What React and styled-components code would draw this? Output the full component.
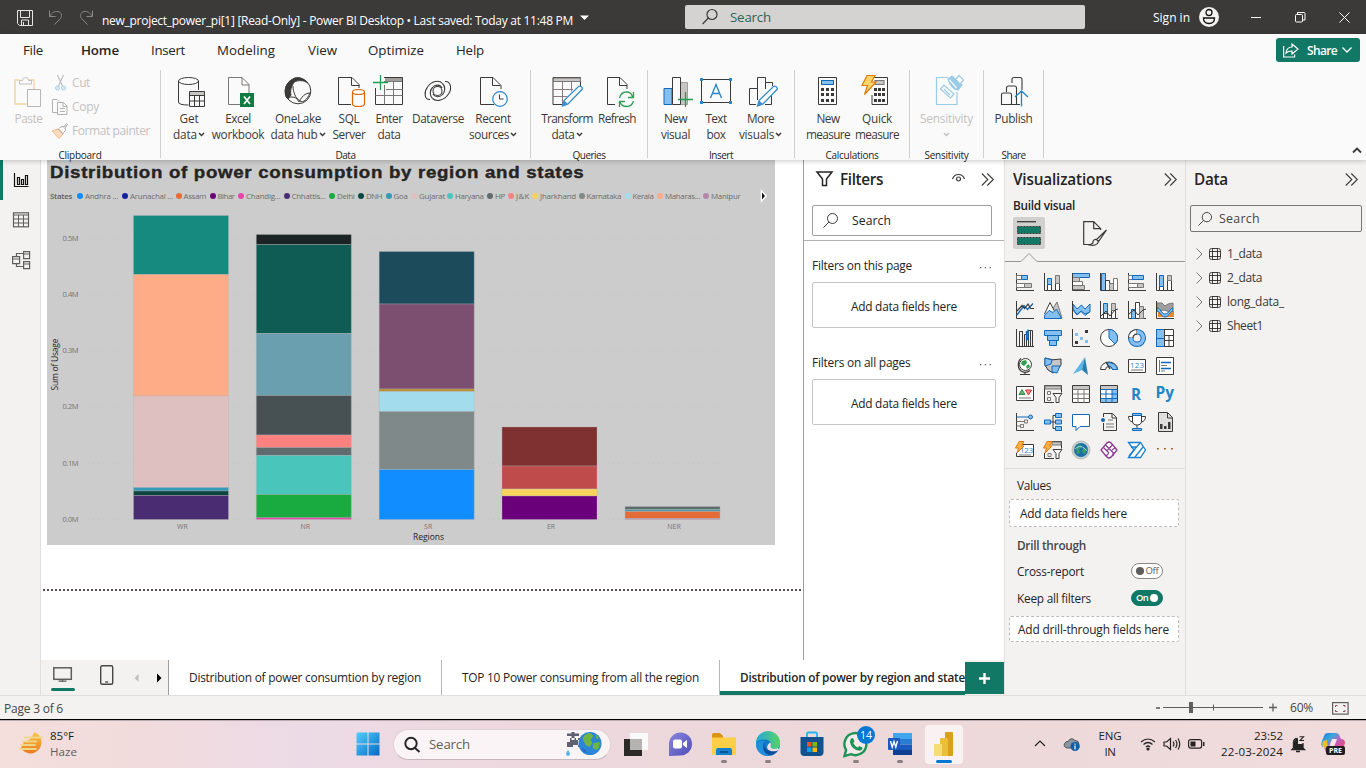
import React, { useLayoutEffect, useRef } from 'react';
import styled, { createGlobalStyle, css } from 'styled-components';

const GlobalStyle = createGlobalStyle`
  *, *::before, *::after { box-sizing: border-box; }
  body { margin: 0; background: #f3f2f1; overflow: hidden; font-family: "Open Sans", "Noto Sans", sans-serif; color: #252423; }
  svg { display: block; flex: none; overflow: visible; }
`;

/* ---------- text that is tracked to a given width ---------- */

const FitSpan = styled.span`
  display: block;
  flex: none;
  white-space: nowrap;
  font-size: ${p => p.$size}px;
  font-weight: ${p => p.$weight || 400};
  color: ${p => p.$color || 'inherit'};
  line-height: ${p => p.$lh || 16}px;
`;

function Fit({ w, size = 12, weight, color, lh, children }) {
  const ref = useRef(null);
  useLayoutEffect(() => {
    const el = ref.current;
    el.style.letterSpacing = '0px';
    const range = document.createRange();
    range.selectNodeContents(el);
    const natural = range.getBoundingClientRect().width;
    el.style.letterSpacing = `${(w - natural) / children.length}px`;
  }, [w, children]);
  return <FitSpan ref={ref} $size={size} $weight={weight} $color={color} $lh={lh}>{children}</FitSpan>;
}

const D = '#3b3a39';
const B = '#84bff0';
const BS = '#1068b8';
const G = '#c8c6c4';
const GS = '#797775';
const GREEN = '#117865';

const Svg = ({ w, h, children, ...rest }) => (
  <svg width={w} height={h} viewBox={`0 0 ${w} ${h}`} fill="none" {...rest}>{children}</svg>
);

/* ---------- title bar ---------- */

const Screen = styled.div`
  width: 1366px;
  height: 768px;
  display: flex;
  flex-direction: column;
  overflow: hidden;
`;

const TitleBar = styled.header`
  height: 34px;
  flex: none;
  display: flex;
  align-items: center;
  background: #3b3a39;
  color: #fff;
  padding-left: 16px;
`;

const QuickActions = styled.div`
  display: flex;
  align-items: center;
  gap: 14px;
  width: 86px;
  padding-top: 2px;
`;

const FileName = styled.div`
  display: flex;
  align-items: center;
  gap: 7px;
  width: 583px;
  padding-top: 7px;
`;

const TitleSearch = styled.div`
  width: 400px;
  height: 24px;
  border-radius: 2px;
  background: #d4d3d1;
  display: flex;
  align-items: center;
  gap: 12px;
  padding-left: 17px;
`;

const WindowArea = styled.div`
  flex: 1;
  display: flex;
  align-items: center;
  padding-left: 68px;
`;

const SignIn = styled.div`
  padding-top: 2px;
`;

const Avatar = styled.div`
  margin: 0 32px 0 9px;
`;

const WindowButtons = styled.div`
  display: flex;
  align-items: center;
  gap: 33px;
  padding-top: 1px;
`;

function Title() {
  return (
    <TitleBar>
      <QuickActions>
        <Svg w={18} h={18} stroke="#e8e6e4">
          <path d="M1.5 1.5h15v15h-13l-2-2z" /><path d="M4.5 2v6.500h9V2M5.500 16v-5h7v5M7.500 16v-3" />
        </Svg>
        <Svg w={16} h={18} stroke="#8a8886"><path d="M1.500 1.500v6h6M1.800 7.200C4 3.500 7 2 10 2.500c3.500.800 4.500 4.500 2.500 7L6.500 15.500" /></Svg>
        <Svg w={16} h={18} stroke="#8a8886"><path d="M14.500 1.500v6h-6M14.200 7.200C12 3.500 9 2 6 2.500c-3.500.800-4.500 4.500-2.500 7L9.500 15.500" /></Svg>
      </QuickActions>
      <FileName>
        <Fit w={471} size={12}>new_project_power_pi[1] [Read-Only] - Power BI Desktop • Last saved: Today at 11:48 PM</Fit>
        <Svg w={9} h={12}><path d="M0 .5h9L4.500 5z" fill="#fff" /></Svg>
      </FileName>
      <TitleSearch>
        <Svg w={16} h={16} stroke="#3b3a39" strokeWidth="1.200"><circle cx="10" cy="5.500" r="5" /><path d="M6.300 9L.6 15" /></Svg>
        <Fit w={41} size={13.3} color="#2c6357">Search</Fit>
      </TitleSearch>
      <WindowArea>
        <SignIn><Fit w={37} size={12}>Sign in</Fit></SignIn>
        <Avatar>
          <Svg w={20} h={20}><circle cx="10" cy="10" r="10" fill="#f3f2f1" /><g stroke="#111" strokeWidth="1.300"><circle cx="10" cy="5.500" r="3" /><path d="M4.500 11h11c0 4-2 5.500-5.500 5.500s-5.500-1.500-5.500-5.500z" /></g></Svg>
        </Avatar>
        <WindowButtons>
          <Svg w={11} h={11} stroke="#fff"><path d="M0 5.500h10" /></Svg>
          <Svg w={11} h={11} stroke="#fff"><rect x=".5" y="2.500" width="7" height="7.500" rx="1" /><path d="M2.500 2.500V.5H9q1 0 1 1V8H8" /></Svg>
          <Svg w={11} h={11} stroke="#fff"><path d="M.5.500l10 10M10.500.500l-10 10" /></Svg>
        </WindowButtons>
      </WindowArea>
    </TitleBar>
  );
}

/* ---------- ribbon ---------- */

const RibbonShell = styled.div`
  height: 126px;
  flex: none;
  background: #fafafa;
  box-shadow: 0 1px 5px rgba(0, 0, 0, 0.22);
  position: relative;
  z-index: 2;
`;

const TabStrip = styled.nav`
  height: 32px;
  display: flex;
  align-items: center;
  padding-left: 23px;
`;

const RibbonTab = styled.div`
  width: ${p => p.$w}px;
`;

const ShareButton = styled.div`
  margin-left: auto;
  margin-right: 6px;
  width: 84px;
  height: 24px;
  border-radius: 3px;
  background: ${GREEN};
  color: #fff;
  display: flex;
  align-items: center;
  padding-left: 7px;
  gap: 8px;
`;

const ShareText = styled.div`
  padding-top: 2px;
`;

const ShareCaret = styled.div`
  margin-left: -3px;
`;

const RibbonBody = styled.div`
  display: flex;
  height: 94px;
  padding-top: 4px;
`;

const Group = styled.section`
  width: ${p => p.$w}px;
  height: 88px;
  border-right: 1px solid #d2d0ce;
  display: flex;
  flex-direction: column;
  align-items: center;
`;

const GroupTools = styled.div`
  height: 77px;
  flex: none;
  width: 100%;
  display: flex;
  justify-content: ${p => (p.$pad === undefined ? 'center' : 'flex-start')};
  padding: 3px 0 0 ${p => p.$pad || 0}px;
`;

const Tool = styled.div`
  width: ${p => p.$w}px;
  display: flex;
  flex-direction: column;
  align-items: center;
  color: ${p => (p.$off ? '#c3c1bf' : '#3b3a39')};
`;

const ToolLine = styled.div`
  height: 16px;
  display: flex;
  align-items: center;
  gap: 1px;
  position: relative;
  top: 1px;
`;

const ClipList = styled.div`
  display: flex;
  flex-direction: column;
  margin-top: -3px;
`;

const ClipItem = styled.div`
  height: 24px;
  display: flex;
  align-items: center;
  gap: 4px;
  color: #c3c1bf;
  padding-top: 1px;
`;

const Collapse = styled.div`
  margin-left: auto;
  align-self: flex-end;
  padding: 0 4px 6px 0;
`;

const Caret = ({ color = 'currentColor' }) => (
  <Svg w={7} h={5} stroke={color} strokeWidth="1.500"><path d="M1 1l2.500 2.500L6 1" /></Svg>
);

const ribbonIcons = {
  paste: <g><path d="M10.500 7H6v24h12" stroke="#f7ddb8" strokeWidth="2" /><path d="M20 7h5v9" stroke="#f7ddb8" strokeWidth="2" /><path d="M10.500 11V7.500h3q0-3 3-3t3 3h3V11z" stroke="#c3c1bf" fill="#fafafa" /><path d="M18.500 16.500h13v17h-13z" stroke="#b9b7b5" fill="#fafafa" /></g>,
  get: <g stroke={D}><path d="M9.500 8v21q0 3 10 3M29.500 8v9" /><ellipse cx="19.500" cy="8" rx="10" ry="3.500" /><path d="M20.500 18.500h15v15h-15z" fill="#fafafa" /><path d="M21 19h14v3H21z" fill={G} stroke="none" /><path d="M20.500 22.500h15M20.500 28h15M25.500 22.500v11M30.500 22.500v11" /></g>,
  excel: <g><path d="M23 31.500H10.500v-27H24l7 7V20M24 4.500v7.500h7" stroke={GS} /><rect x="22" y="20" width="14" height="14" fill="#107c41" /><path d="M26 23.500l6 7.500M32 23.500l-6 7.500" stroke="#fff" strokeWidth="1.700" /></g>,
  lake: <g stroke={D}><circle cx="20" cy="18" r="12.800" /><path d="M8 24C5 15 10 8 15 6l2 2c-4 5-5 10-4 14l-3 4z" fill={D} /><path d="M15 6c4-3 11-1 15 4-5-3-9-3-14-1z" fill={D} /><path d="M15 13c0 6 3 12 6 16M21 29c4-8 8-9 12-9M9 25c4-2 10-1 13 3 3 2 7-1 10-8" /></g>,
  sql: <g><path d="M22 31.500H9.500v-27H23l7 7V15M22.500 4.500v8h8" stroke={D} /><g stroke="#d8680b" fill="#fafafa" strokeWidth="1.200"><path d="M23.500 19v12q0 2.500 6 2.500t6-2.500V19" /><ellipse cx="29.500" cy="19" rx="6" ry="2.500" /></g></g>,
  enter: <g stroke={D}><path d="M15 4.500h18.500v27h-27V15" /><path d="M16 5h17v3H16z" fill="#a19f9d" stroke="none" /><path d="M15 8.500h18M15.500 12v19.500M24.500 8.500v23M17 16.500h17M6.500 22.500h27" stroke={GS} /><path d="M11.500 2v15M4 9.500h15" stroke="#1d9e50" strokeWidth="1.300" /></g>,
  dataverse: <g stroke={D} strokeWidth="1.100"><circle cx="19.500" cy="18" r="4.500" /><path d="M12 26.500c-5.500.5-6.500-7-2.500-12.500C13.500 8 21 6.500 24.500 10.500" /><path d="M27 8.500c5.500-.5 7.500 6.500 3.500 12.500-4 6-12 8.500-16 4.500" /><path d="M24.500 10.500c3 3 3 8 0 11-3 3.500-8 2.500-9.500-.500M14.500 25.500c-3-3-3-8 0-11 3-3.500 8-3 9.500.500" /></g>,
  recent: <g><path d="M21 31.500H7.500v-27H20l8 8V16M19.500 4.500v8h8" stroke={D} /><circle cx="27" cy="26" r="7.300" stroke="#2b88c8" strokeWidth="1.200" fill="#fafafa" /><path d="M26.500 21.500V26h4" stroke={D} /></g>,
  transform: <g><path d="M20 31.500H6v-27h27.500V14" stroke={D} /><path d="M6.500 5h27v3.500h-27z" fill={G} stroke={GS} /><path d="M6 16.500h20M6 23.500h14M15.500 8.500v23M24.500 8.500v10" stroke="#8d7a80" /><path d="M15.500 33l1.500-5.500 15-14.500q3 0 3.500 3L21 31z" fill="#fafafa" stroke="#2b88c8" strokeWidth="1.200" /><path d="M15.500 33l1.500-5.500 4 3.500z" fill="#3b8fd0" /></g>,
  refresh: <g><path d="M18 31.500H10.500v-27H23l7 7V16M22.500 4.500v8h7.500" stroke={D} /><g stroke="#2f9e57" strokeWidth="1.300"><path d="M22.500 25q1.500-6 7-6 5 0 6 5M36.500 19v5.500h-5.500M36.500 28q-1.500 5.500-7 5.500-5 0-6.500-4.500M22.500 34v-5.500H28" /></g></g>,
  newVisual: <g><path d="M16.500 9.500h15v22h-15z" fill={G} stroke="#a19f9d" /><path d="M8 15.500h8v16H8z" fill={B} stroke={BS} /><path d="M16.500 4.500h8v27h-8z" fill="#fafafa" stroke={D} /><path d="M29.500 19v15M22 26.500h15" stroke="#1d9e50" strokeWidth="1.300" /></g>,
  textBox: <g><path d="M5.500 6.500h29v23h-29z" stroke={D} /><g fill="#2b88c8"><rect x="4" y="5" width="3" height="3" /><rect x="33" y="5" width="3" height="3" /><rect x="4" y="28" width="3" height="3" /><rect x="33" y="28" width="3" height="3" /></g><path d="M14.500 25L20 11.500 25.500 25M16.500 20.500h7" stroke="#2b88c8" strokeWidth="1.400" /></g>,
  more: <g stroke={D}><path d="M15 31.500H8.500v-16H16M16.500 27V4.500h8V16M24.500 9.500h7V13M30.500 22v9.500H24" /><path d="M16.500 33l1.500-5.500 15-14.500q3 0 3.500 3L22 31z" fill="#fafafa" stroke="#2b88c8" strokeWidth="1.200" /><path d="M16.500 33l1.500-5.500 4 3.500z" fill="#3b8fd0" stroke="none" /></g>,
  calc: <g><path d="M10.500 4.500h18v27h-18z" stroke={D} /><rect x="13.500" y="7.500" width="12" height="4" fill={B} stroke={BS} />{[15, 20, 26].map(y => [13, 18, 23].map(x => <rect key={`${x}${y}`} x={x} y={y} width="3" height="3" fill={D} />))}</g>,
  quick: <g><path d="M16 4.500h14.500v27H15V22" stroke={D} /><rect x="18" y="7.500" width="9" height="4" fill={G} stroke={GS} />{[15, 20, 26].map(y => [17, 21, 25].map(x => <rect key={`${x}${y}`} x={x} y={y} width="3" height="3" fill={D} />))}<path d="M10 2.500h8L14.500 9h4.500L7.500 21.500l3-9H5z" fill="#fbd56a" stroke="#e07b12" strokeWidth="1.200" /></g>,
  sensitivity: <g stroke="#9ccbe8" strokeWidth="1.200"><path d="M21 4.500H9.500v27H30V19" /><path d="M13.500 16l3.500-4 10 9-3.500 4zM17 16l6 6" /><path d="M21 6l4-3 10 9-4 5q-7-1-10-11z" fill="#9ccbe8" /><path d="M22.500 7l7 8" stroke="#fafafa" /><path d="M29 6l3-3.500 4.500 4.500-3 3.500" fill="#fafafa" /></g>,
  publish: <g stroke={D} strokeWidth="1.100"><path d="M18 10V6.500q0-2 2-2h6q2 0 2 2V17M12.500 19v-4q0-2 2-2h6q2 0 2 2v17M7.500 31.500V22q0-2 2-2h6q2 0 2 2v9.500zM7.500 31.500H26" /><path d="M27.500 33.500V18.500M21 24l6.500-6 6.500 6" stroke="#2385c6" strokeWidth="1.300" /></g>,
};

const RibbonTool = ({ icon, w, l1, w1, l2, w2, caret, off }) => (
  <Tool $w={w} $off={off}>
    <Svg w={40} h={36}>{ribbonIcons[icon]}</Svg>
    <ToolLine><Fit w={w1} size={11.800}>{l1}</Fit></ToolLine>
    <ToolLine>{l2 && <Fit w={w2} size={11.800}>{l2}</Fit>}{caret && <Caret />}</ToolLine>
  </Tool>
);

const ribbonGroups = [
  { name: 'Data', lw: 20, w: 370, pad: 4, tools: [
    { icon: 'get', w: 48, l1: 'Get', w1: 19, l2: 'data', w2: 24, caret: true },
    { icon: 'excel', w: 50, l1: 'Excel', w1: 25.500, l2: 'workbook', w2: 52.500 },
    { icon: 'lake', w: 70, l1: 'OneLake', w1: 46, l2: 'data hub', w2: 47, caret: true },
    { icon: 'sql', w: 32, l1: 'SQL', w1: 21, l2: 'Server', w2: 33 },
    { icon: 'enter', w: 48, l1: 'Enter', w1: 27, l2: 'data', w2: 23 },
    { icon: 'dataverse', w: 50, l1: 'Dataverse', w1: 52 },
    { icon: 'recent', w: 60, l1: 'Recent', w1: 35.500, l2: 'sources', w2: 40, caret: true },
  ] },
  { name: 'Queries', lw: 33, w: 117, pad: 6, tools: [
    { icon: 'transform', w: 60, l1: 'Transform', w1: 51.500, l2: 'data', w2: 23, caret: true },
    { icon: 'refresh', w: 40, l1: 'Refresh', w1: 38 },
  ] },
  { name: 'Insert', lw: 24, w: 147, pad: 7, tools: [
    { icon: 'newVisual', w: 41, l1: 'New', w1: 23, l2: 'visual', w2: 29 },
    { icon: 'textBox', w: 40, l1: 'Text', w1: 21, l2: 'box', w2: 19 },
    { icon: 'more', w: 49, l1: 'More', w1: 27, l2: 'visuals', w2: 35, caret: true },
  ] },
  { name: 'Calculations', lw: 53, w: 115, pad: 8, tools: [
    { icon: 'calc', w: 50, l1: 'New', w1: 23, l2: 'measure', w2: 44 },
    { icon: 'quick', w: 48, l1: 'Quick', w1: 30, l2: 'measure', w2: 44 },
  ] },
  { name: 'Sensitivity', lw: 44, w: 74, tools: [{ icon: 'sensitivity', w: 60, l1: 'Sensitivity', w1: 53, caret: true, off: true }] },
  { name: 'Share', lw: 24, w: 60, tools: [{ icon: 'publish', w: 50, l1: 'Publish', w1: 38 }] },
];

const tabs = [['File', 58, 20], ['Home', 70, 38], ['Insert', 66, 34], ['Modeling', 91, 58], ['View', 60, 29], ['Optimize', 88, 56], ['Help', 40, 28]];

function Ribbon() {
  return (
    <RibbonShell>
      <TabStrip>
        {tabs.map(([name, w, tw]) => (
          <RibbonTab key={name} $w={w}><Fit w={tw} size={13.3} weight={name === 'Home' ? 600 : 400}>{name}</Fit></RibbonTab>
        ))}
        <ShareButton>
          <Svg w={16} h={15} stroke="#fff" strokeWidth="1.200"><path d="M.600 3v11h11v-2.500" /><path d="M3 10c.500-4 3-6 6-6V1l6 5-6 5V8C6 8 4.500 8.500 3 10z" /></Svg>
          <ShareText><Fit w={30} size={12} weight={600}>Share</Fit></ShareText>
          <ShareCaret><Svg w={10} h={6} stroke="#fff" strokeWidth="1.300"><path d="M.500.500l4.500 4.500 4.500-4.500" /></Svg></ShareCaret>
        </ShareButton>
      </TabStrip>
      <RibbonBody>
        <Group $w={161}>
          <GroupTools $pad={8}>
            <RibbonTool icon="paste" w={41} l1="Paste" w1={28} off />
            <ClipList>
              <ClipItem>
                <Svg w={19} h={16}><path d="M8.500 0l5 11M14.500 0l-5 11" stroke="#b0aeac" /><circle cx="8.500" cy="13" r="2" stroke="#a6cfe9" fill="#dcecf7" /><circle cx="14.500" cy="13" r="2" stroke="#a6cfe9" fill="#dcecf7" /></Svg>
                <Fit w={18}>Cut</Fit>
              </ClipItem>
              <ClipItem>
                <Svg w={19} h={16} stroke="#b3b1af"><path d="M8 13.500H3.500V.500H8l2 2M8.500 3.500h6l3.500 3.500v8.500H8.500zM14 4v3.500h4M11 9.500h5M11 12.500h5" /></Svg>
                <Fit w={27}>Copy</Fit>
              </ClipItem>
              <ClipItem>
                <Svg w={19} h={16}><path d="M3 8l6-2 5 5-4 4.500z" fill="#fbdcc0" stroke="#f0b98a" /><path d="M9 5.500l5.500 5.500M10.500 5L13 3.500l2 .500 2.500-3.500 1 1L16 5l.500 2.500-2 2" stroke="#a8a6a4" /></Svg>
                <Fit w={78}>Format painter</Fit>
              </ClipItem>
            </ClipList>
          </GroupTools>
          <Fit w={43} size={10} lh={17}>Clipboard</Fit>
        </Group>
        {ribbonGroups.map(g => (
          <Group key={g.name} $w={g.w}>
            <GroupTools $pad={g.pad}>{g.tools.map((t, i) => <RibbonTool key={i} {...t} />)}</GroupTools>
            <Fit w={g.lw} size={10} lh={17}>{g.name}</Fit>
          </Group>
        ))}
        <Collapse><Svg w={10} h={7} stroke="#3b3a39" strokeWidth="1.800"><path d="M1 5.500l4-4 4 4" /></Svg></Collapse>
      </RibbonBody>
    </RibbonShell>
  );
}

/* ---------- report canvas ---------- */

const Workspace = styled.div`
  height: 535px;
  flex: none;
  display: flex;
`;

const ViewRail = styled.nav`
  width: 41px;
  background: #f3f2f1;
  border-right: 1px solid #e1dfdd;
`;

const RailItem = styled.div`
  height: 40px;
  display: flex;
  align-items: center;
  padding-left: ${p => (p.$active ? 10 : 12)}px;
  border-left: ${p => (p.$active ? `3px solid ${GREEN}` : 'none')};
`;

const Center = styled.div`
  width: 963px;
  display: flex;
  flex-direction: column;
`;

const CenterTop = styled.div`
  height: 500px;
  display: flex;
`;

const Canvas = styled.main`
  width: 762px;
  background: #fff;
  padding-left: 6px;
`;

const Visual = styled.article`
  width: 728px;
  height: 385px;
  background: #ccc;
`;

const VisualTitle = styled.h1`
  margin: 0;
  padding: 2px 0 0 3px;
  height: 26px;
  font-family: "Liberation Sans", Arial, sans-serif;
  -webkit-text-stroke: 0.4px #252423;
  transform: scaleX(1.1);
  transform-origin: 3px 0;
`;

const Legend = styled.div`
  height: 20px;
  padding-left: 3px;
  display: flex;
  align-items: center;
`;

const LegendItem = styled.div`
  width: ${p => p.$w}px;
  flex: none;
  display: flex;
  align-items: center;
  gap: 2px;
`;

const LegendNext = styled.div`
  margin-left: 4px;
`;

const Dot = styled.span`
  width: 6px;
  height: 6px;
  border-radius: 3px;
  background: ${p => p.$c};
`;

const PageEdge = styled.div`
  margin: 44px 0 0 -4px;
  height: 2px;
  background: repeating-linear-gradient(90deg, #55504f 0 2px, #fff 2px 4px);
`;

const legend = [
  ['Andhra ...', '#118dff', 45, 33], ['Arunachal ...', '#12239e', 53.500, 43], ['Assam', '#e66c37', 34, 22.500], ['Bihar', '#6b007b', 28.500, 17],
  ['Chandig...', '#e645ab', 45.500, 34.500], ['Chhattis...', '#4a2c73', 45.500, 34], ['Delhi', '#1aab40', 29, 17.500], ['DNH', '#0e453f', 27.500, 16],
  ['Goa', '#3599b8', 25.500, 14], ['Gujarat', '#dfbfbf', 36, 26], ['Haryana', '#4ac5bb', 40, 28.500], ['HP', '#5f6b6d', 21, 10], ['J&K', '#fb8281', 24, 13.500],
  ['Jharkhand', '#f4d25a', 46.500, 36], ['Karnataka', '#7f898a', 46, 34.500], ['Kerala', '#a4ddee', 32.500, 21], ['Maharas...', '#fdab89', 46, 35], ['Manipur', '#b687ac', 53, 29.500],
];

// Segments run top to bottom: [top y, colour]; every stack ends on the baseline.
const BASE = 313.5;
const stacks = [
  { name: 'WR', x: 86.500, seg: [[9.500, '#178a80'], [68.500, '#feab88'], [190, '#dec0c1'], [281.500, '#3599b8'], [285, '#0e453f'], [289.500, '#4a2c73']] },
  { name: 'NR', x: 209.300, seg: [[28.500, '#1c2325'], [38.500, '#0f5c54'], [127.500, '#6a9faf'], [189.500, '#475052'], [229, '#fd817e'], [241.500, '#5f6b6d'], [249.500, '#4ac5bb'], [288.500, '#1aab40'], [311.800, '#e645ab']] },
  { name: 'SR', x: 332.200, seg: [[45.500, '#1c4c5b'], [98, '#7c4f70'], [183, '#b9902f'], [185.500, '#a3dced'], [205.500, '#7f8989'], [263.500, '#118dff']] },
  { name: 'ER', x: 455, seg: [[221, '#7f3030'], [260, '#bf4c4b'], [283, '#f9d45c'], [290, '#6b007b']] },
  { name: 'NER', x: 578, seg: [[300.500, '#5f6b6d'], [303.500, '#4b9bae'], [305.500, '#e66c37'], [312.500, '#b687ac']] },
];
const ticks = [['0.5M', 32.500], ['0.4M', 88.500], ['0.3M', 144.500], ['0.2M', 200.500], ['0.1M', 257.500], ['0.0M', 313.500]];

const PlotSvg = styled.svg`
  font-family: "Open Sans", sans-serif;
  font-size: 7.5px;
  fill: #777573;
`;

const AxisTitle = styled.text`
  font-size: 8.5px;
  fill: #252423;
`;

const Plot = () => (
  <PlotSvg width="728" height="339" viewBox="0 0 728 339">
    {ticks.map(([t, y]) => (
      <g key={t}>
        <path d={`M36 ${y}h638`} stroke="#c4c4c4" strokeWidth="1" strokeDasharray="1 4" />
        <text x="15.500" y={y + 2.600} textLength="16">{t}</text>
      </g>
    ))}
    {stacks.map(s => (
      <g key={s.name}>
        {s.seg.map(([y, c], i) => {
          const end = i + 1 < s.seg.length ? s.seg[i + 1][0] : BASE;
          return <rect key={i} x={s.x} y={y} width="95" height={end - y} fill={c} stroke="#b3b3b3" strokeOpacity=".35" strokeWidth="1" />;
        })}
        <text x={s.x + 49} y="323" textAnchor="middle" fontSize="7">{s.name}</text>
      </g>
    ))}
    <AxisTitle x="366" y="334" textLength="31">Regions</AxisTitle>
    <AxisTitle transform="translate(11 184.500) rotate(-90)" textLength="52">Sum of Usage</AxisTitle>
  </PlotSvg>
);

/* ---------- filters pane ---------- */

const FiltersPane = styled.aside`
  width: 201px;
  background: #fff;
  border-left: 1px solid #a19f9d;
`;

const PaneHead = styled.div`
  height: 38px;
  display: flex;
  align-items: center;
  padding-left: ${p => p.$pad}px;
`;

const Push = styled.div`
  margin-left: auto;
  margin-right: ${p => p.$r}px;
  display: flex;
  align-items: center;
  gap: 16px;
`;

const SearchField = styled.div`
  margin: ${p => p.$m};
  width: ${p => p.$w}px;
  height: ${p => p.$h}px;
  border: 1px solid ${p => p.$c};
  border-radius: 2px;
  background: ${p => p.$bg || '#fff'};
  display: flex;
  align-items: center;
  padding-left: ${p => p.$pad}px;
  gap: ${p => p.$gap}px;
`;

const FilterTop = styled.div`
  height: 81px;
  border-bottom: 1px solid #b3b0ad;
`;

const FilterSection = styled.section`
  height: 97px;
  padding: 16px 0 0 8px;
`;

const FilterLabel = styled.div`
  display: flex;
  height: 16px;
  justify-content: space-between;
  padding-right: 13px;
`;

const DropBox = styled.div`
  margin-top: 9px;
  width: 184px;
  height: 46px;
  border: 1px solid #c8c6c4;
  border-radius: 2px;
  display: flex;
  align-items: center;
  justify-content: center;
  padding-top: 1px;
`;

const Chevrons = () => (
  <Svg w={13} h={13} stroke="#3b3a39" strokeWidth="1.100"><path d="M.800.500l6 6-6 6M6.300.500l6 6-6 6" /></Svg>
);
const Lens = ({ s = 15 }) => (
  <svg width={s} height={s} viewBox="0 0 15 15" fill="none" stroke="#3b3a39" strokeWidth="1"><circle cx="9.500" cy="5.500" r="5" /><path d="M6 9L.5 14.500" /></svg>
);
const Ellipsis3 = () => (
  <Svg w={11} h={18}><path d="M0 10h1.300v1.300H0zM4.800 10h1.300v1.300H4.800zM9.600 10h1.300v1.300H9.600z" fill="#605e5c" /></Svg>
);

function Filters() {
  return (
    <FiltersPane>
      <FilterTop>
        <PaneHead $pad={12}>
          <Svg w={24} h={16} stroke="#252423" strokeWidth="1.500"><path d="M1 1h15L10.500 8v6.500H6.500V8z" /></Svg>
          <Fit w={43} size={15.3} weight={600}>Filters</Fit>
          <Push $r={10}>
            <Svg w={13} h={11} stroke="#3b3a39" strokeWidth="1.200"><path d="M.5 5Q2 .5 6.500.5t6 4.500" /><circle cx="6.500" cy="5" r="2" /></Svg>
            <Chevrons />
          </Push>
        </PaneHead>
        <SearchField $m="7px 0 0 8px" $w={180} $h={31} $c="#a19f9d" $pad={10} $gap={14}><Lens /><Fit w={39} size={12.2}>Search</Fit></SearchField>
      </FilterTop>
      {[['Filters on this page', 100], ['Filters on all pages', 98.500]].map(([t, w]) => (
        <FilterSection key={t}>
          <FilterLabel><Fit w={w} size={11.900}>{t}</Fit><Ellipsis3 /></FilterLabel>
          <DropBox><Fit w={106} size={11.900}>Add data fields here</Fit></DropBox>
        </FilterSection>
      ))}
    </FiltersPane>
  );
}

/* ---------- page tabs ---------- */

const PageStrip = styled.div`
  height: 35px;
  display: flex;
  background: #f3f2f1;
`;

const LayoutSwitch = styled.div`
  width: 128px;
  border-right: 1px solid #a19f9d;
  display: flex;
  align-items: flex-start;
  padding: 5px 0 0 10px;
`;

const PageTab = styled.div`
  width: ${p => p.$w}px;
  background: #fff;
  border-right: ${p => (p.$active ? 'none' : '1px solid #b9b7b5')};
  border-bottom: ${p => (p.$active ? `4px solid ${GREEN}` : 'none')};
  padding: 9px 0 0 20px;
  overflow: hidden;
`;

const AddPage = styled.div`
  width: 39px;
  height: 32px;
  margin-top: 2px;
  background: ${GREEN};
  display: flex;
  align-items: center;
  justify-content: center;
`;

function PageTabs() {
  return (
    <PageStrip>
      <LayoutSwitch>
        <Svg w={46} h={27}><rect x="2.800" y="2.800" width="17.500" height="11.500" stroke="#605e5c" strokeWidth="1.500" /><path d="M11.500 14v3M7.500 16.200h8" stroke="#605e5c" strokeWidth="1.200" /><path d="M1.500 24.500h21" stroke={GREEN} strokeWidth="3" strokeLinecap="round" /></Svg>
        <Svg w={37} h={27}><rect x="3.700" y=".7" width="12" height="18.500" rx="1.500" stroke="#484644" strokeWidth="1.400" /><path d="M8.200 17h3" stroke="#484644" strokeWidth="1.300" /></Svg>
        <Svg w={24} h={27}><path d="M4.500 9v8L.5 13z" fill="#c0bebc" /><path d="M23 8.500v9l4.500-4.500z" fill="#000" /></Svg>
      </LayoutSwitch>
      <PageTab $w={273}><Fit w={232} size={11.900}>Distribution of power consumtion by region</Fit></PageTab>
      <PageTab $w={278}><Fit w={237} size={11.900}>TOP 10 Power consuming from all the region</Fit></PageTab>
      <PageTab $w={245} $active><Fit w={225} size={11.800} weight={600}>Distribution of power by region and state</Fit></PageTab>
      <AddPage><Svg w={11} h={11} stroke="#fff" strokeWidth="2.400"><path d="M5.500 0v11M0 5.500h11" /></Svg></AddPage>
    </PageStrip>
  );
}

/* ---------- visualizations pane ---------- */

const VizPane = styled.aside`
  width: 182px;
  background: #f3f2f1;
  border-left: 1px solid #e1dfdd;
  border-right: 1px solid #e1dfdd;
`;

const BuildLabel = styled.div`
  padding-left: 8px;
  height: 19px;
  margin-top: -1px;
`;

const BuildModes = styled.div`
  display: flex;
  align-items: center;
  padding-left: 8px;
  margin-top: 1px;
  height: 32px;
  gap: 38px;
`;

const ModeTile = styled.div`
  width: 32px;
  height: 32px;
  border-radius: 2px;
  background: #d2d0ce;
  padding: 4px 0 0 4px;
`;

const VizGrid = styled.div`
  display: grid;
  grid-template-columns: repeat(6, 28px);
  grid-auto-rows: 28px;
  place-items: center;
  height: 201px;
  padding: 1px 0 0 6px;
`;

const FieldWells = styled.div`
  border-top: 1px solid #e1dfdd;
  padding: 8px 5px 0 4px;
`;

const Row = styled.div`
  height: ${p => p.$h}px;
  display: flex;
  align-items: center;
  justify-content: space-between;
  padding: 0 17px 0 8px;
`;

const Well = styled.div`
  width: 170px;
  height: ${p => p.$h}px;
  margin-top: ${p => p.$mt}px;
  border: 1px dashed #bebbb8;
  border-radius: 2px;
  background: #fff;
  display: flex;
  align-items: center;
  padding-left: ${p => p.$pad}px;
`;

const Toggle = styled.div`
  width: 32px;
  height: 16px;
  border-radius: 8px;
  display: flex;
  align-items: center;
  justify-content: center;
  gap: 2px;
  background: ${p => (p.$on ? GREEN : '#fff')};
  border: 1px solid ${p => (p.$on ? GREEN : '#8a8886')};
  color: ${p => (p.$on ? '#fff' : '#605e5c')};
  flex-direction: ${p => (p.$on ? 'row' : 'row-reverse')};
  &::after {
    content: '';
    width: 8px;
    height: 8px;
    border-radius: 50%;
    background: ${p => (p.$on ? '#fff' : '#605e5c')};
  }
`;

const Axes = () => <path d="M.5 0v17.500H18" stroke={D} />;
const Bolt = () => <path d="M3 .5h5L5.500 5H8L1 12l1.500-5H-.5z" fill="#fbb040" stroke="#e07b12" />;
const Digits = styled.text`
  font: 8px "Open Sans", sans-serif;
  fill: #2b88c8;
`;
const Glyph = styled.text`
  font: 700 ${p => p.$s}px "Open Sans", sans-serif;
  fill: #2585c7;
`;

const vizIcons = [
  <g><Axes /><path d="M.5 2.500h5v4h-5zM.5 10.500h8v4h-8z" fill="#fff" stroke={GS} /><path d="M5.500 2.500h6v4h-6z" fill={B} stroke={BS} /><path d="M8.500 10.500h7v4h-7z" fill={G} stroke={GS} /></g>,
  <g><Axes /><path d="M3.500 11.500h4v6h-4zM11.500 10.500h4v7h-4z" fill="#fff" stroke={D} /><path d="M3.500 5.500h4v6h-4z" fill={B} stroke={BS} /><path d="M11.500 2.500h4v8h-4z" fill={G} stroke={GS} /></g>,
  <g><path d="M.5.5h17v4H.5z" fill={B} stroke={BS} /><path d="M.5 4.500h7v4h-7z" fill={G} stroke={GS} /><path d="M.5 8.500h10v4H.5z" fill="#fff" stroke={GS} /><path d="M.5 12.500h12v4H.5z" fill={G} stroke={GS} /><Axes /></g>,
  <g><path d="M1.500.5h4v17h-4z" fill={B} stroke={BS} /><path d="M5.500 7.500h4v10h-4z" fill="#fff" stroke={D} /><path d="M9.500 10.500h4v7h-4z" fill={G} stroke={GS} /><path d="M13.500 5.500h4v12h-4z" fill="#fff" stroke={GS} /><Axes /></g>,
  <g><Axes /><path d="M.5 2.500h4v4h-4zM.5 10.500h9v4h-9z" fill="#fff" stroke={GS} /><path d="M4.500 2.500h11v4h-11z" fill={B} stroke={BS} /><path d="M9.500 10.500h6v4h-6z" fill={G} stroke={GS} /></g>,
  <g><Axes /><path d="M3.500 13.500h4v4h-4zM11.500 7.500h4v10h-4z" fill="#fff" stroke={D} /><path d="M3.500 2.500h4v11h-4z" fill={B} stroke={BS} /><path d="M11.500 2.500h4v5h-4z" fill={G} stroke={GS} /></g>,
  <g><Axes /><path d="M1 14L8 4.500l3.500 4 5.500-6" stroke={BS} strokeWidth="1.300" /><path d="M1 10l5-5.500 2.500 3L12 3l2.500 4.500H18" stroke={D} strokeWidth="1.200" /></g>,
  <g><path d="M8 9l5-8 5 16H8z" fill={G} stroke={GS} /><path d="M.5 13L6 1.500 12 13" fill="#fff" stroke={D} /><path d="M.5 14.500v3h17L12.500 8 9 11.500 5 9.500z" fill={B} stroke={BS} /></g>,
  <g><path d="M1 3l4 5 4.500-4 3.500 4 5-5v8l-5 2-4-3-4 3.500L1 8z" fill={B} stroke={BS} /><path d="M1 9l4 5 4-3.500 4 4 4-3" stroke={BS} /><Axes /></g>,
  <g><Axes /><path d="M3.500 2.500h4v10h-4z" fill={B} stroke={BS} /><path d="M3.500 12.500h4v5h-4zM11.500 9.500h4v8h-4z" fill="#fff" stroke={D} /><path d="M11.500 2.500h4v7h-4z" fill={G} stroke={GS} /><path d="M1 15l5-5 4 5 5-6 3-1" stroke={D} /></g>,
  <g><Axes /><path d="M3.500 8.500h4v9h-4z" fill={B} stroke={BS} /><path d="M7.500 1.500h4v16h-4z" fill="#fff" stroke={D} /><path d="M11.500 5.500h4v12h-4z" fill={G} stroke={GS} /><path d="M1 13l5-4 4 5 5-5 3-1" stroke={D} /></g>,
  <g><path d="M1 2h5l3 3 3-2 5-1v5l-3 4-6-2-7 1z" fill="#a19f9d" stroke={GS} /><path d="M2 11h4l3 3h4l2-4h3v6H2z" fill="#e88a2a" /><path d="M1 7c4 0 4 6 8 6s5-6 8-6v3c-4 1-4 6-8 6s-4-5-8-6z" fill={B} stroke={BS} /><Axes /></g>,
  <g><Axes /><path d="M3.500 17V2.500h3M6.500 2v15.500M8.500 17V5.500h2v12M12.500 17V1.500h4v16M14.500 2v15" stroke={D} /><path d="M10.500 2v8.500h1.500V.5" stroke={BS} strokeWidth="1.400" /></g>,
  <g fill={B} stroke={BS}><path d="M.5 1.500h17v5H.5zM3.500 6.500h11v5h-11zM5.500 11.500h7v5h-7z" /></g>,
  <g><Axes /><g fill={B}><path d="M3 4h3v3H3zM8 8h3v3H8zM13 11h3v3h-3z" /></g><path d="M13 1h3v3h-3zM3 12h3v3H3z" fill={D} /></g>,
  <g><circle cx="9" cy="9" r="8.500" fill="#fff" stroke={D} /><path d="M9 9V.5A8.500 8.500 0 0 1 15 15z" fill={B} stroke={BS} /></g>,
  <g><circle cx="9" cy="9" r="6.300" stroke={BS} strokeWidth="5.500" /><circle cx="9" cy="9" r="6.300" stroke={B} strokeWidth="3.500" /><path d="M2.700 9A6.300 6.300 0 0 1 9 2.700" stroke={D} strokeWidth="5.500" /><path d="M2.700 8.500A6.300 6.300 0 0 1 8.500 2.700" stroke="#fff" strokeWidth="3.500" /></g>,
  <g><path d="M.5.5h17v17H.5z" fill="#fff" stroke={D} /><path d="M.5.5h8v9h-8zM.5 9.500h8v8h-8z" fill={B} stroke={BS} /><path d="M8.500 6.500h9M13 6.500V17.500M8.500 11.500h9M8.500.5v17" stroke={D} /></g>,
  <g><circle cx="9.500" cy="7.500" r="6" fill="#fff" stroke={D} /><path d="M6 4l4-1 1 3-3 3-3-2zM10 9l3-2 1 3-3 2z" fill="#2e9e4f" /><path d="M5 1.500C1 5 1.500 12 6 14.500c3 1.500 6 .5 8-1M9 15v2M4 17.500h10" stroke={D} strokeWidth="1.200" /></g>,
  <g><path d="M1 1q8 3 16 1v6l-3 4-5 4-5-3-3-5z" fill={G} stroke={D} /><path d="M1 1l7 2-1 4-6 2zM8 9h8l-3 7-5-1z" fill={B} stroke={BS} /></g>,
  <g><path d="M13 0L1 17l9-4z" fill="#5bb5e8" /><path d="M13 0l3 18-6-5z" fill="#2a7fb0" /></g>,
  <g><path d="M.5 12.500A8.500 7.500 0 0 1 17.500 12.500h-5A3.500 3 0 0 0 5.500 12.500z" fill="#fff" stroke={D} /><path d="M6 6a9 8 0 0 1 11.500 6.500h-5A4 4 0 0 0 9 9z" fill={B} stroke={BS} /><path d="M6 5l4 7" stroke={D} strokeWidth="1.500" /></g>,
  <g><path d="M.5 2.500h17v13H.5z" fill="#fff" stroke={D} /><Digits x="2" y="10.500" textLength="14">123</Digits><path d="M3 13h12" stroke={GS} /></g>,
  <g><path d="M.5.5h17v17H.5z" fill="#fff" stroke={D} /><path d="M3.500 3v12" stroke={GS} /><path d="M5 5.500h10M5 11.500h10" stroke={BS} strokeWidth="1.600" /><path d="M5 8.500h6M5 14h4" stroke={GS} /></g>,
  <g><path d="M.5 1.500h17v14H.5z" fill="#fff" stroke={D} /><path d="M3 9.500h6L6 4.500z" fill="#6ab27a" stroke="#2e8b45" /><path d="M9.500 5h6l-3 5z" fill="#f08a85" stroke="#d13438" /><path d="M3 13h12" stroke={GS} /></g>,
  <g><path d="M10 17.500H.5V.5h17v7" stroke={D} fill="none" /><path d="M1 1h16v3H1z" fill={G} stroke={GS} /><path d="M3.500 6.500h3v3h-3zM3.500 12.500h3v3h-3z" stroke={GS} /><path d="M9 8.500h9l-3 4v5h-3v-5z" fill="#fff" stroke={D} /></g>,
  <g><path d="M.5.5h17v17H.5z" fill="#fff" stroke={D} /><path d="M1 1h16v3H1z" fill={G} /><path d="M.5 4.500h17M.5 9h17M.5 13.500h17M6 4v14M12 4v14" stroke={GS} /></g>,
  <g><path d="M.5.5h17v17H.5z" fill="#fff" stroke={D} /><path d="M1 1h16v3H1z" fill={G} /><path d="M12 5h5v12H1v-4h11z" fill={B} /><path d="M.5 4.500h17M.5 9h17M.5 13.500h17M6 4v14M12 4v14" stroke={BS} /></g>,
  <Glyph x="3" y="14.500" $s={15.500} textLength="10" lengthAdjust="spacingAndGlyphs">R</Glyph>,
  <Glyph x="-.5" y="13" $s={15.500} textLength="18.500" lengthAdjust="spacingAndGlyphs">Py</Glyph>,
  <g><Axes /><path d="M.5 4h12" stroke={BS} /><circle cx="14.500" cy="4" r="2" fill={B} stroke={BS} /><path d="M.5 8.500h8M.5 13h4" stroke={GS} /><path d="M8.500 7h3v3h-3zM4.500 11.500h3v3h-3z" stroke={GS} /></g>,
  <g><path d="M6 9h6M9 2.500h3M9 2.500v13h3" stroke={D} /><g fill={B} stroke={BS}><path d="M.5 7h6v4h-6zM11.500.5h6v4h-6zM11.500 7h6v4h-6zM11.500 13.500h6v4h-6z" /></g></g>,
  <path d="M.5 1.500h17v12H8l-4 4v-4H.5z" fill="#fff" stroke={BS} />,
  <g><path d="M3.500 10V17.500h13V4.500l-4-4h-9V4M12 .5v4.500h4.500" stroke={D} /><circle cx="3" cy="7" r="2" fill={BS} /><path d="M8 7h5M6 11h8M6 14h8" stroke={GS} /></g>,
  <g><path d="M4.500 1.500h9V8q0 4-4.500 4T4.500 8zM4.500 3.500h-4q0 5 4.500 5.500M13.500 3.500h4q0 5-4.500 5.500M9 12v3" stroke={D} fill="#fff" /><path d="M4.500.5h9v2h-9zM4.500 15.500h9v2h-9z" fill={B} stroke={BS} /></g>,
  <g><path d="M2.500-.5h9l5 5v14h-14z" fill="#e1dfdd" stroke={D} /><path d="M11.500 0v5h5" stroke={D} /><path d="M4 11h2.500v5H4zM8 13h2.500v3H8zM12 9h2.500v7H12z" fill={D} /></g>,
  <g><path d="M5 3.500h12.500v12H.5V12" fill="#fff" stroke={D} /><Digits x="4" y="11.500" textLength="13">123</Digits><path d="M3 14h12" stroke={GS} /><Bolt /></g>,
  <g><path d="M10 17.500H.5V12M7 .5h10.500v7" stroke={D} fill="none" /><path d="M8 1h9v3H8z" fill={G} stroke={GS} /><path d="M4 12.500h3v3H4z" stroke={GS} /><path d="M9 8.500h9l-3 4v5h-3v-5z" fill="#fff" stroke={D} /><Bolt /></g>,
  <g><circle cx="9" cy="9" r="9" fill="#c9cfcd" stroke="#b5bcba" /><circle cx="9" cy="9" r="7" fill="#1d6fa8" /><path d="M4 6l4-3 2 3-3 2 1 4-3 1zM11 7l4 1-2 5-3-2z" fill="#38a065" /><path d="M3 8c4-4 8-3 12 2" stroke="#9fd0e8" /></g>,
  <g stroke="#8a3a8f" strokeWidth="1.300"><path d="M6 3q3-4 6 0l5 6-5 6q-3 4-6 0L1 9z" fill="#fff" /><path d="M5.500 4l7 7q2 2 0 4M12.500 4L7 9.500M3.500 6.500L9 12M9 12l-3 3M12 9l3.500-2.500" /></g>,
  <g stroke="#1a7fd0" strokeWidth="1.300"><path d="M.500 1.500h12l5 7.500-5 7.500h-12L6 9z" fill="#fff" /><path d="M1 15l11-13M7 16l8-10M3 6h5" /></g>,
  <path d="M1 7h1.800v1.500H1zM8 7h1.800v1.500H8zM15 7h1.800v1.500H15z" fill="#a45c1c" />,
];

function Visualizations() {
  return (
    <VizPane>
      <PaneHead $pad={8}>
        <Fit w={99} size={15.3} weight={600}>Visualizations</Fit>
        <Push $r={8}><Chevrons /></Push>
      </PaneHead>
      <BuildLabel><Fit w={62} size={11.800} weight={600} lh={17}>Build visual</Fit></BuildLabel>
      <BuildModes>
        <ModeTile>
          <Svg w={24} h={24}><path d="M0 .7h19" stroke={D} strokeWidth="1.300" /><g fill={GREEN} stroke={D} strokeDasharray="2 1"><rect x=".5" y="5.500" width="23" height="7" /><rect x=".5" y="16.500" width="23" height="7" /></g></Svg>
        </ModeTile>
        <Svg w={24} h={25} stroke={D} strokeWidth="1.200"><path d="M7 23.500H.7V.7h10l7 7V9M10.700.7v7h7" /><path d="M23.500 9L13.500 18.500l2 2zM13.500 18.500c-2-.5-4 1-3.500 3.500L6.500 24c4 1 8 0 9-3.500z" fill="#f3f2f1" /></Svg>
      </BuildModes>
      <Svg w={180} h={18} stroke="#979593"><path d="M0 12.500h16l8-8 8 8h148" /></Svg>
      <VizGrid>{vizIcons.map((icon, i) => <Svg key={i} w={18} h={18}>{icon}</Svg>)}</VizGrid>
      <FieldWells>
        <Row $h={16}><Fit w={34} size={11.800}>Values</Fit></Row>
        <Well $h={28} $pad={10} $mt={6}><Fit w={107} size={11.900}>Add data fields here</Fit></Well>
        <Row $h={36}><Fit w={69} size={11.800} weight={600} color="#484644">Drill through</Fit></Row>
        <Row $h={15}><Fit w={67} size={11.800}>Cross-report</Fit><Toggle><Fit w={13} size={9.500} lh={12}>Off</Fit></Toggle></Row>
        <Row $h={39}><Fit w={74} size={11.800}>Keep all filters</Fit><Toggle $on><Fit w={12} size={9.500} weight={600} lh={12}>On</Fit></Toggle></Row>
        <Well $h={26} $pad={8} $mt={-1}><Fit w={151} size={11.900}>Add drill-through fields here</Fit></Well>
      </FieldWells>
    </VizPane>
  );
}

/* ---------- data pane ---------- */

const DataPane = styled.aside`
  flex: 1;
  background: #f3f2f1;
`;

const TableList = styled.div`
  padding: 10px 0 0 10px;
`;

const TableRow = styled.div`
  height: 24px;
  display: flex;
  align-items: center;
  gap: 6px;
  color: #3b3a39;
`;

const DataTables = () => (
  <DataPane>
    <PaneHead $pad={8}>
      <Fit w={34} size={15.3} weight={600}>Data</Fit>
      <Push $r={8}><Chevrons /></Push>
    </PaneHead>
    <SearchField $m="7px 0 0 4px" $w={172} $h={27} $c="#797775" $bg="#f3f2f1" $pad={7} $gap={7}><Lens s={14} /><Fit w={41} size={12.400} color="#484644">Search</Fit></SearchField>
    <TableList>
      {[['1_data', 35], ['2_data', 35], ['long_data_', 57], ['Sheet1', 36]].map(([t, w]) => (
        <TableRow key={t}>
          <Svg w={7} h={12} stroke="#797775"><path d="M.5.500L6 6 .5 11.500" /></Svg>
          <Svg w={12} h={12} stroke="#3b3a39"><rect x=".5" y=".5" width="11" height="11" rx="2" /><path d="M3.500.500v11M8.500.500v11M.500 3.500h11M.500 8.500h11" /></Svg>
          <Fit w={w} size={12}>{t}</Fit>
        </TableRow>
      ))}
    </TableList>
  </DataPane>
);

/* ---------- status bar ---------- */

const StatusBar = styled.footer`
  height: 25px;
  flex: none;
  background: #f3f2f1;
  border-top: 1px solid #e1dfdd;
  border-bottom: 1px solid #000;
  display: flex;
  align-items: center;
  justify-content: space-between;
  padding: 1px 17px 0 4px;
  color: #484644;
`;

const PageCount = styled.div`
  padding-top: 2px;
`;

const ZoomTools = styled.div`
  display: flex;
  align-items: center;
`;

const Status = () => (
  <StatusBar>
    <PageCount><Fit w={59} size={12}>Page 3 of 6</Fit></PageCount>
    <ZoomTools>
      <Svg w={135} h={14} stroke="#605e5c"><path d="M1 7h4" strokeWidth="1.600" /><path d="M8 6.500h100M58.500 3.500v6" /><path d="M36 1v11" strokeWidth="4" /><path d="M114 6.500h8M118 2.500v8" strokeWidth="1.300" /></Svg>
      <Fit w={23} size={12}>60%</Fit>
      <Svg w={36} h={13} stroke="#605e5c"><rect x="19.600" y=".6" width="15.500" height="11.500" strokeWidth="1.200" /><path d="M22.500 5V3.500h2M30 3.500h2V5M32 8v1.500h-2M24.500 9.500h-2V8" stroke="#8a4a6a" /></Svg>
    </ZoomTools>
  </StatusBar>
);

/* ---------- Windows taskbar ---------- */

const Taskbar = styled.footer`
  height: 48px;
  flex: none;
  border-top: 1px solid #b9abb0;
  background: linear-gradient(90deg, #f4dfdc 0%, #f1dbdc 10%, #ecdae6 22%, #edd9e0 32%, #ecd7da 52%, #eed9da 75%, #f0dcdc 100%);
  display: flex;
  align-items: center;
  padding-bottom: 1px;
`;

const Weather = styled.div`
  width: 337px;
  padding-left: 18px;
  display: flex;
  align-items: center;
  gap: 7px;
`;

const StartButton = styled.div`
  width: 43px;
  padding-left: 19px;
`;

const TaskSearch = styled.div`
  width: 218px;
  height: 31px;
  margin: 0 3px 0 13px;
  border-radius: 16px;
  background: #faf4f6;
  border: 1px solid #e0d2d6;
  border-bottom-color: #c6b8bc;
  display: flex;
  align-items: center;
  justify-content: space-between;
  padding: 0 8px 0 10px;
`;

const SearchPrompt = styled.div`
  display: flex;
  align-items: center;
`;

const App44 = styled.div`
  width: 44px;
  height: 48px;
  display: flex;
  align-items: center;
  justify-content: center;
  position: relative;
  ${p => p.$running && css`
    &::after { content: ''; position: absolute; bottom: 5px; width: 6px; height: 3px; border-radius: 2px; background: #8b7f82; }
  `}
  ${p => p.$active && css`
    &::before { content: ''; position: absolute; inset: 5px 3px 4px 3px; border-radius: 4px; background: #faf1f2; }
    &::after { content: ''; position: absolute; bottom: 5px; width: 16px; height: 3px; border-radius: 2px; background: #0078d4; }
  `}
  svg { position: relative; }
`;

const Badge = styled.div`
  position: absolute;
  top: 6px;
  right: 3px;
  width: 18px;
  height: 18px;
  border-radius: 50%;
  background: #0078d4;
  color: #fff;
  display: flex;
  justify-content: center;
  align-items: center;
`;

const Tray = styled.div`
  margin-left: auto;
  width: 332px;
  display: flex;
  align-items: center;
`;

const TrayItem = styled.div`
  margin-left: ${p => p.$ml}px;
`;

const Stack = styled.div`
  display: flex;
  flex-direction: column;
  align-items: ${p => p.$align || 'flex-start'};
  width: ${p => p.$w}px;
`;

const PreLabel = styled.text`
  font: 700 7px "Open Sans", sans-serif;
  fill: #fff;
`;

function WindowsTaskbar() {
  return (
    <Taskbar>
      <Weather>
        <Svg w={25} h={24}>
          <defs><linearGradient id="sun" x1="0" y1="0" x2="0" y2="1"><stop offset="0" stopColor="#f9c846" /><stop offset="1" stopColor="#ec7a1e" /></linearGradient></defs>
          <path d="M16 0a11 11 0 1 1-13 16L6 10q8-2 10-10z" fill="url(#sun)" />
          <path d="M7 5.500h17M5 9.500h13M3 13h14M2 17h16" stroke="#f0d688" strokeWidth="1.800" strokeLinecap="round" />
        </Svg>
        <Stack $w={60}><Fit w={24} size={11.500} color="#1b1a19">85°F</Fit><Fit w={27} size={11.500} color="#605e5c">Haze</Fit></Stack>
      </Weather>
      <StartButton>
        <Svg w={24} h={24}>
          <defs><linearGradient id="win" x1="0" y1="0" x2="1" y2="1"><stop offset="0" stopColor="#4fd0fb" /><stop offset="1" stopColor="#0669c6" /></linearGradient></defs>
          <path d="M1.500.500H11.500v11H.500V1.500zM12.500 .500h11v11h-11zM.500 12.500h11v11H.500zM12.500 12.500h11v11h-11z" fill="url(#win)" />
        </Svg>
      </StartButton>
      <TaskSearch>
        <SearchPrompt>
          <Svg w={25} h={17} stroke="#252423" strokeWidth="1.900"><circle cx="7" cy="7.500" r="5.700" /><path d="M11 12l4.500 4" /></Svg>
          <Fit w={41} size={13.2} color="#605e5c">Search</Fit>
        </SearchPrompt>
        <Svg w={38} h={28}>
          <path d="M6 8v4H3v5h6v-2h8v-5h-5V8zM3 3.500h12v2.500H3zM7.500 2h3v8h-3zM14 8h4v9h-4z" fill="#5d6170" /><path d="M4 20q-4 5 0 6 4-1 0-6z" fill="#52b4ea" />
          <circle cx="26" cy="13.500" r="11.500" fill="#2b85d8" /><path d="M18.500 8q3-5 8-5l3 3-3 4 2 3-3 4-4-2-2-4zM29.500 13l6-1q1 5-3 8l-4-2zM31.500 4l4 4-3 1z" fill="#6db544" /><path d="M17.500 18q4 0 5 5-4-1-5-5z" fill="#2b6cc0" />
        </Svg>
      </TaskSearch>
      <App44><Svg w={24} h={24}><path d="M0 7h18v17H0z" fill="#2b2a29" /><path d="M6 1h18v17H6z" fill="#fafafa" /><path d="M6 7h12v11H6z" fill="#b5b3b1" /></Svg></App44>
      <App44><Svg w={24} h={24}><defs><linearGradient id="chat" x1="0" y1="0" x2="1" y2="1"><stop offset="0" stopColor="#8a87de" /><stop offset="1" stopColor="#4f4bb8" /></linearGradient></defs><path d="M1 24V12A11.500 11.500 0 1 1 12 23.500z" fill="url(#chat)" /><rect x="5" y="7.500" width="9" height="9" rx="2" fill="#fff" /><path d="M15 11l4-3v8l-4-3z" fill="#fff" /></Svg></App44>
      <App44 $running><Svg w={24} h={24}><path d="M0 3q0-2 2-2h6l3 3v5H0z" fill="#d99411" /><path d="M0 5.500h24V21q0 2-2 2H2q-2 0-2-2z" fill="#fccf46" /><path d="M4 23v-5q0-2 2-2h12q2 0 2 2v5z" fill="#1680d0" /><path d="M8 19h8v2H8z" fill="#0a5592" /></Svg></App44>
      <App44 $running><Svg w={24} h={24}>
        <defs><linearGradient id="edge" x1="0" y1="0" x2="1" y2="0"><stop offset="0" stopColor="#24a7dd" /><stop offset="1" stopColor="#56d364" /></linearGradient></defs>
        <circle cx="12" cy="12" r="12" fill="#1479c9" /><path d="M0 11A12 12 0 0 1 24 11c0 5-3 6.500-7 6.500-3 0-3.500-1.500-2.500-2.800C16.500 12 14 7.500 9 7.500 4 7.500 1 9 0 11z" fill="url(#edge)" /><path d="M9 9c-4 4-2 13 6 14.500C5 25 0 18 0 12c2-3 6-4 9-3z" fill="#1f8fdb" /><path d="M9 10c-3 5 2 11 13 8-3 5-8 6-11 4-4-2-5-9-2-12z" fill="#0c4f9e" /><path d="M14 10.500c2 2 0 3.500 1 5.500 2 1.500 5 1 7 0l1 2c-4 2-9 1.500-11-.5-2-3 0-5 2-7z" fill="#f0e0e3" />
      </Svg></App44>
      <App44><Svg w={24} h={24}><path d="M7 5V2q0-1.500 1.500-1.500h7Q17 .500 17 2v3" stroke="#22b5ee" strokeWidth="1.800" /><path d="M.500 5h23v15q0 4-4 4h-15q-4 0-4-4z" fill="#12528f" /><path d="M7 10h4.500v4.500H7z" fill="#f25022" /><path d="M12.500 10H17v4.500h-4.500z" fill="#7fba00" /><path d="M7 15.500h4.500V20H7z" fill="#00a4ef" /><path d="M12.500 15.500H17V20h-4.500z" fill="#ffb900" /></Svg></App44>
      <App44 $running>
        <Svg w={26} h={26}><path d="M1.500 25l1.600-6A11 11 0 1 1 8 23.200z" stroke="#1d9355" strokeWidth="2.400" fill="#f6eaec" /><path d="M8 7.500l2-.5 1.500 3.500-1.300 1.500q1.500 3 4.500 4.500l1.600-1.500 3.200 1.500q0 3-3 3.200Q9 19 7 11.500q0-2.500 1-4z" fill="#1d9355" /></Svg>
        <Badge><Fit w={12} size={10.500} lh={16}>14</Fit></Badge>
      </App44>
      <App44 $running><Svg w={24} h={24}><path d="M5 1h19v6H5z" fill="#41a5ee" /><path d="M5 7h19v5.500H5z" fill="#2b7cd3" /><path d="M5 12.500h19V18H5z" fill="#185abd" /><path d="M5 18h19v5H5z" fill="#103f91" /><rect x="0" y="6" width="12" height="12" rx="1" fill="#185abd" /><path d="M2.500 9l1.700 6L6 9.500 7.800 15l1.700-6" stroke="#fff" strokeWidth="1.400" /></Svg></App44>
      <App44 $active><Svg w={20} h={24}><rect x="11" y="0" width="8" height="24" rx="1" fill="#d9a01b" /><rect x="6" y="6" width="8" height="18" rx="1" fill="#ecbf3a" /><rect x="0" y="12" width="8" height="12" rx="1" fill="#f7dc74" /></Svg></App44>
      <Tray>
        <Svg w={29} h={10} stroke="#252423" strokeWidth="1.200"><path d="M1 7l5-5 5 5" /></Svg>
        <Svg w={35} h={18}><path d="M4 13q-4-1-2.500-4.500Q3 6 5 6.500q3-5 7-1 4 0 4 4v3.500z" fill="#8d959c" stroke="#4b545c" /><circle cx="12" cy="11.500" r="4.500" fill="#0f5fa8" /><path d="M12 10.500v4M12 8.500v1.200" stroke="#fff" strokeWidth="1.200" /></Svg>
        <Stack $w={24} $align="center"><Fit w={23} size={11.500}>ENG</Fit><Fit w={11} size={11.500}>IN</Fit></Stack>
        <TrayItem $ml={19}><Svg w={45} h={14} stroke="#252423" strokeWidth="1.200"><path d="M0 5Q7-1 14 5M2.500 7.500Q7 3.500 11.500 7.500M5 10q2-2 4 0" /><circle cx="7" cy="12" r="1" fill="#252423" /><path d="M23 5h2.500l4-3.500v11l-4-3.500H23zM32 4.500q2 2.500 0 5M34.500 3q3 4 0 8M37 1.500q3.500 5.500 0 11" /></Svg></TrayItem>
        <TrayItem $ml={2}><Svg w={22} h={10}><rect x=".6" y=".600" width="13" height="8.500" rx="2" stroke="#252423" strokeWidth="1.200" /><path d="M2.500 2.500h5v5h-5zM15 3h1.500v4H15z" fill="#252423" /></Svg></TrayItem>
        <Stack $w={73} $align="flex-end"><Fit w={29} size={11.500} color="#1b1a19">23:52</Fit><Fit w={62} size={11.500} color="#1b1a19">22-03-2024</Fit></Stack>
        <TrayItem $ml={8}><Svg w={30} h={17}><path d="M2.500 12V6.500q0-4 4-4M12 7v5l1.500 1.500H1L2.500 12M5 15.500h4" stroke="#252423" strokeWidth="1.300" fill="none" /><path d="M3 6q1-3.500 4-3.500V8h5v5H3z" fill="#252423" /><path d="M8.500.800h4L9 4.500h4" stroke="#252423" strokeWidth="1.100" /></Svg></TrayItem>
        <Svg w={25} h={24}>
          <defs><linearGradient id="cop" x1="0" y1="0" x2="1" y2="1"><stop offset="0" stopColor="#1b6fe8" /><stop offset=".3" stopColor="#39a9d8" /><stop offset=".5" stopColor="#b765c8" /><stop offset=".7" stopColor="#e04f8b" /><stop offset="1" stopColor="#f0842b" /></linearGradient></defs>
          <path d="M7 1h8q3 0 4 4l1 2q4 0 4 4l-2 7q-1 4-5 4H8q-3 0-4-4l-1-3q-4 0-2-6l2-5q1-3 4-3z" fill="url(#cop)" /><path d="M2 9l4-1 1 8H4q-4-1-2-7z" fill="#e8c02c" /><path d="M11 7h5l-3 8H8z" fill="#f5e6e8" /><rect x="5" y="14" width="19" height="9" rx="2" fill="#1f1f1f" /><PreLabel x="8" y="21" textLength="13">PRE</PreLabel>
        </Svg>
      </Tray>
    </Taskbar>
  );
}

/* ---------- page ---------- */

export default function App() {
  return (
    <Screen>
      <GlobalStyle />
      <Title />
      <Ribbon />
      <Workspace>
        <ViewRail>
          <RailItem $active><Svg w={16} h={16} stroke="#111" strokeWidth="1.200"><path d="M1.500 1v13.500H15.500" /><path d="M4.500 5.500h2v7h-2zM8.500 7.500h2v5h-2zM12.500 3.500h2v9h-2z" /></Svg></RailItem>
          <RailItem><Svg w={18} h={16} stroke="#605e5c"><rect x="1.500" y=".800" width="15" height="14" strokeWidth="1.200" /><path d="M1 3h16M1 7h16M1 11h16M6.500 3v12M11.500 3v12" /></Svg></RailItem>
          <RailItem><Svg w={18} h={18} stroke="#605e5c" strokeWidth="1.200"><path d="M.6 5.600h7v7h-7zM11.600.6h6v7h-6zM11.600 10.600h6v7h-6zM.6 8h7M11.600 3h6M11.600 13h6M4.500 5.500V2.500h7M4.500 12.500v3h7" /></Svg></RailItem>
        </ViewRail>
        <Center>
          <CenterTop>
            <Canvas>
              <Visual>
                <VisualTitle><Fit w={531} size={17} weight={700} lh={22}>Distribution of power consumption by region and states</Fit></VisualTitle>
                <Legend>
                  <LegendItem $w={27}><Fit w={22} size={7.800} weight={600} color="#605e5c" lh={10}>States</Fit></LegendItem>
                  {legend.map(([t, c, w, tw]) => (
                    <LegendItem key={t} $w={w}><Dot $c={c} /><Fit w={tw} size={7.900} color="#6f6d6b" lh={10}>{t}</Fit></LegendItem>
                  ))}
                  <LegendNext><Svg w={8} h={10}><path d="M1.500 0L6 5 1.500 10z" fill="#fff" stroke="#fff" strokeWidth="1.500" /><path d="M2 1.500L5 5 2 8.500z" fill="#111" /></Svg></LegendNext>
                </Legend>
                <Plot />
              </Visual>
              <PageEdge />
            </Canvas>
            <Filters />
          </CenterTop>
          <PageTabs />
        </Center>
        <Visualizations />
        <DataTables />
      </Workspace>
      <Status />
      <WindowsTaskbar />
    </Screen>
  );
}
